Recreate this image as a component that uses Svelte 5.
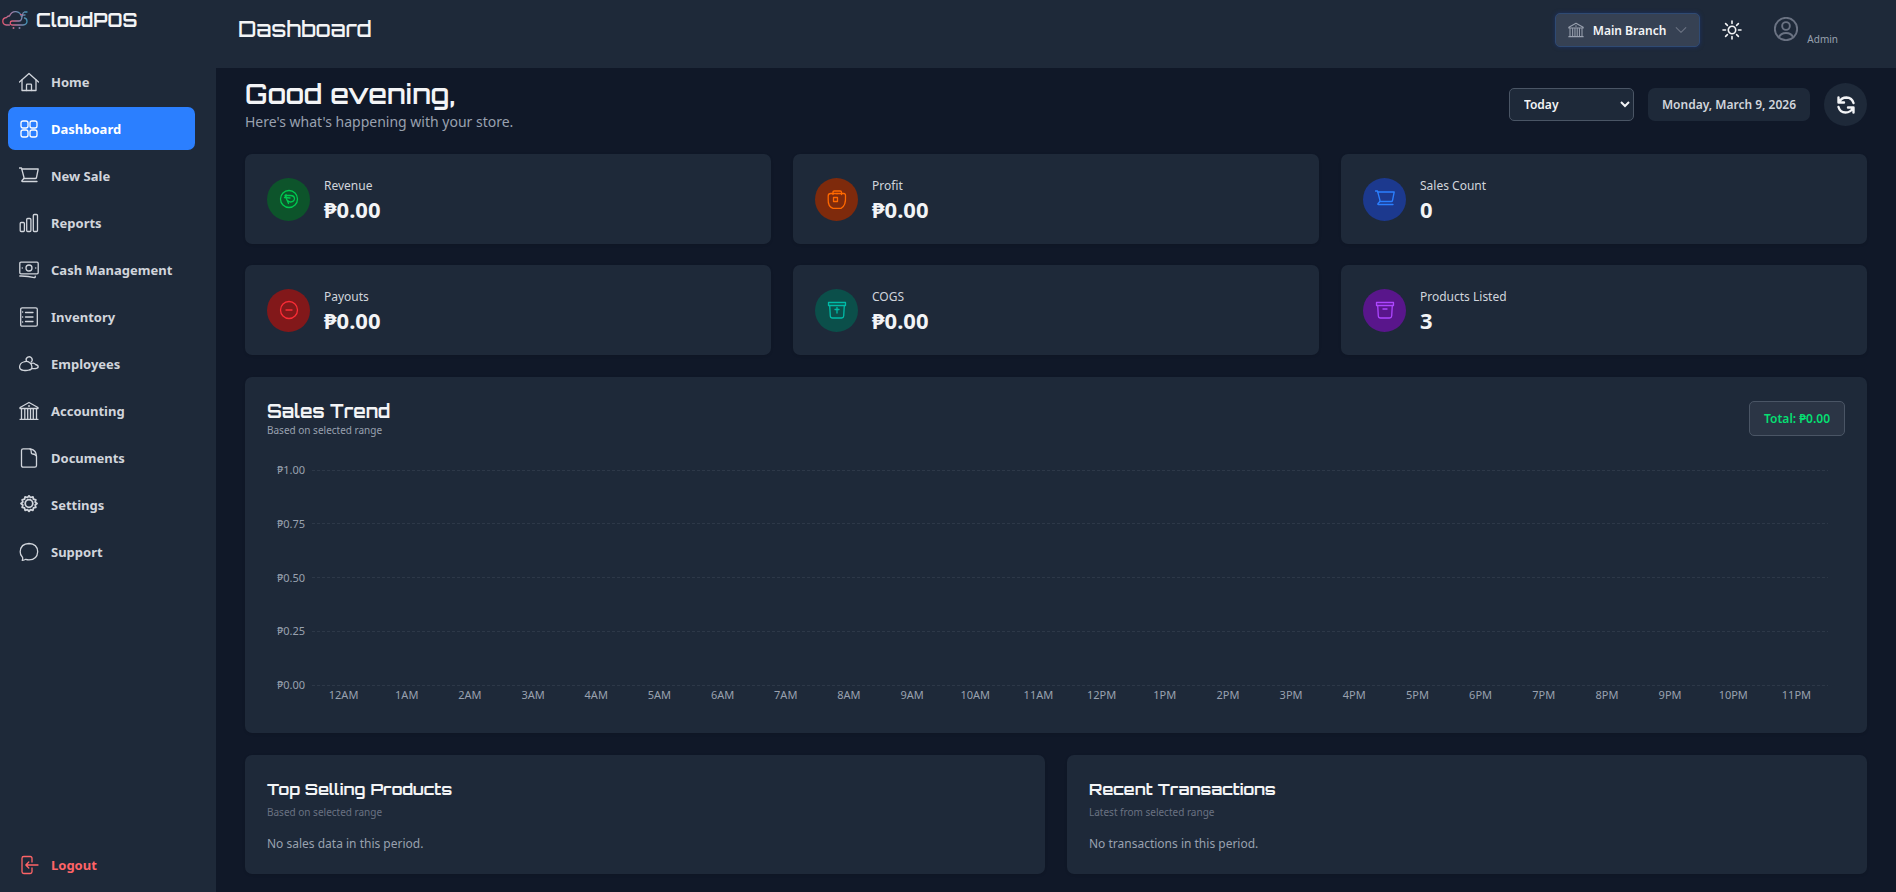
<script lang="ts">
	type Stat = { label: string; value: string; icon: string; tone: string };

	const icons: Record<string, string[]> = {
		home: ['M.5 10 10 1.5 19.5 10', 'M3 8v10.500h14V8', 'M7.500 18.500v-5.500q0-.8.8-.8h3.400q.8 0 .8.8v5.500'],
		grid: [
			'M4 2h3q2 0 2 2v3q0 2-2 2H4Q2 9 2 7V4q0-2 2-2z',
			'M13 2h3q2 0 2 2v3q0 2-2 2h-3q-2 0-2-2V4q0-2 2-2z',
			'M4 11h3q2 0 2 2v3q0 2-2 2H4q-2 0-2-2v-3q0-2 2-2z',
			'M13 11h3q2 0 2 2v3q0 2-2 2h-3q-2 0-2-2v-3q0-2 2-2z'
		],
		cart: ['M.5 2h2l2.500 9.500q.3 1-.5 1.500L3 14.500q-.6 1 .5 1H18', 'M2.700 3h16.500l-1.700 8.500q-.2 1-1.200 1H4.500'],
		bars: [
			'M2.200 9.500h2.200q1 0 1 1v7q0 1-1 1H2.200q-1 0-1-1v-7q0-1 1-1z',
			'M8.700 5.500h2.200q1 0 1 1v11q0 1-1 1H8.700q-1 0-1-1v-11q0-1 1-1z',
			'M15.300 1.500h2.200q1 0 1 1v15q0 1-1 1h-2.200q-1 0-1-1v-15q0-1 1-1z'
		],
		cash: [
			'M2 2.200h16q1.200 0 1.200 1.200v9.200q0 1.200-1.200 1.200H2Q.8 13.800.8 12.600V3.400Q.8 2.200 2 2.200z',
			'M13 8a3 3 0 1 1-6 0 3 3 0 0 1 6 0z',
			'M3.200 8h.1M16.700 8h.1',
			'M.8 16q8-.2 14.500 1.600.9.200.9-.7v-.8'
		],
		list: [
			'M3.200.8h13.600q1.500 0 1.500 1.500v15.400q0 1.500-1.500 1.500H3.200q-1.500 0-1.500-1.500V2.300Q1.700.8 3.200.8z',
			'M3.500 5h.2M3.500 10h.2M3.500 15h.2',
			'M6.500 5.500h7.500M6.500 10h7.500M6.500 14.500h7.500'
		],
		people: [
			'M7.400 7a3 3 0 1 1 4.600 1.200',
			'M4.500 8q3.500-1.500 6 .5 2.500 1.500 2.500 4.500-.2 3-3 3-2.500.8-5.500.3-4-.3-3.900-3.600Q1 9 4.500 8z',
			'M12.300 9.500q2.700-1.200 4.200 1 2.800.6 2.700 2.500-.6 2-6 1.600'
		],
		bank: ['M1 6.500 10 1.500l9 5v1H1z', 'M2.500 8v9.500M5.800 8v9.500M8.700 8v9.500M11.500 8v9.500M14.300 8v9.500M17.500 8v9.500', 'M1 18.300h18', 'M9.500 5h1'],
		doc: ['M4.200.8h7.300q6 1.500 6 7.500v9.200q0 1.700-1.700 1.700H4.200q-1.700 0-1.700-1.700v-15Q2.500.8 4.200.8z', 'M11 1q1.500 1 1.300 3.500 0 1.500 1.500 1.500 2.500 0 3.500 2'],
		gear: [
			'M13.800 8.500a3.800 3.800 0 1 1-7.600 0 3.800 3.800 0 0 1 7.600 0z',
			'M10 .8 11.500 2.500 13.900 1.800 14.500 4.200 16.800 4.800 16.200 7.100 18 8.500 16.200 10 16.800 12.400 14.500 12.900 13.900 15.300 11.500 14.600 10 16.300 8.500 14.600 6.100 15.300 5.500 12.900 3.200 12.400 3.800 10 2 8.500 3.800 7.100 3.200 4.800 5.500 4.200 6.100 1.800 8.500 2.500z'
		],
		chat: ['M3.200 18.300Q4 17 3.600 15.500 1 13 1.200 9.800 1.600 1.700 10 1.500q8.400.4 8.700 8.200-.5 8-8.700 8.100-1.600 0-3.200-.5-1.700 1.100-3.600 1z'],
		logout: ['M13 7V3.200Q13 1.500 11.200 1.500H4.800Q3 1.500 3 3.200v13.600q0 1.700 1.800 1.700h6.400q1.800 0 1.800-1.700V13', 'M19 10H7M9.800 7 6.800 10l3 3'],
		peso: ['M18.500 10a8.500 8.500 0 1 1-17 0 8.500 8.500 0 0 1 17 0z', 'M6 6.500 9.500 14.500M6 6.500h5.500q4 .2 4 3.300-.2 3-4 3.200-1.500 0-3-1.500M5.500 8.500 11 9M7 5.500v3'],
		bag: ['M6 5.500V3.200Q6 2 7.200 2h6Q14.500 2 14.500 3.200v2.300', 'M6 19.300Q.8 17.500 1.200 10.500V7q0-2.500 2.500-2.500h13q2 0 1.800 2.500.6 10-4.500 12.300z', 'M6.500 8.500h4v4h-4z', 'M10 4.500v.3'],
		boxup: ['M1.500 2.500h17v3h-17z', 'M2.700 5.500l.6 10.500q.2 2 2.200 2h9q2 0 2.200-2l.6-10.500', 'M10 13V7.500M8 9.500h4'],
		box: ['M1.500 2.500h17v3h-17z', 'M2.700 5.500l.6 10.500q.2 2 2.200 2h9q2 0 2.200-2l.6-10.500', 'M8 9h4'],
		minus: ['M18.500 10a8.500 8.500 0 1 1-17 0 8.500 8.500 0 0 1 17 0z', 'M7 10h6'],
		sun: ['M13.700 10a3.700 3.700 0 1 1-7.400 0 3.700 3.700 0 0 1 7.400 0z', 'M10 1v2.500M10 16.500V19M1 10h2.500M16.500 10H19M3.600 3.600 5.400 5.400M14.600 14.600l1.800 1.800M3.600 16.400l1.800-1.800M14.600 5.400l1.800-1.800'],
		user: ['M19.300 10a9.300 9.300 0 1 1-18.600 0 9.300 9.300 0 0 1 18.600 0z', 'M13.200 7.500a3.200 3.200 0 1 1-6.400 0 3.200 3.200 0 0 1 6.400 0z', 'M4 17q1.500-3.700 6-3.700t6 3.700'],
		chevron: ['M2 6l8 8 8-8'],
		refresh: ['M2.500 2.500V7.500H8M3 7Q5.500 2.500 10.500 2.500q5.500.2 7 5.500', 'M17.500 17.500v-5H12M17 13q-2.500 4.500-7.500 4.500Q4 17.300 2.500 12']
	};

	const nav = [
		{ label: 'Home', icon: 'home' },
		{ label: 'Dashboard', icon: 'grid' },
		{ label: 'New Sale', icon: 'cart' },
		{ label: 'Reports', icon: 'bars' },
		{ label: 'Cash Management', icon: 'cash' },
		{ label: 'Inventory', icon: 'list' },
		{ label: 'Employees', icon: 'people' },
		{ label: 'Accounting', icon: 'bank' },
		{ label: 'Documents', icon: 'doc' },
		{ label: 'Settings', icon: 'gear' },
		{ label: 'Support', icon: 'chat' }
	];

	const stats: Stat[] = [
		{ label: 'Revenue', value: '₱0.00', icon: 'peso', tone: 'green' },
		{ label: 'Profit', value: '₱0.00', icon: 'bag', tone: 'orange' },
		{ label: 'Sales Count', value: '0', icon: 'cart', tone: 'blue' },
		{ label: 'Payouts', value: '₱0.00', icon: 'minus', tone: 'red' },
		{ label: 'COGS', value: '₱0.00', icon: 'boxup', tone: 'teal' },
		{ label: 'Products Listed', value: '3', icon: 'box', tone: 'purple' }
	];

	const ticks = ['₱1.00', '₱0.75', '₱0.50', '₱0.25', '₱0.00'];
	const hours = Array.from({ length: 24 }, (_, h) => `${h % 12 || 12}${h < 12 ? 'AM' : 'PM'}`);

	const panels = [
		{ title: 'Top Selling Products', sub: 'Based on selected range', empty: 'No sales data in this period.' },
		{ title: 'Recent Transactions', sub: 'Latest from selected range', empty: 'No transactions in this period.' }
	];

	let active = $state('Dashboard');
	let range = $state('Today');
</script>

{#snippet icon(name: string)}
	<svg class="icon i-{name}" viewBox="0 0 20 20" aria-hidden="true">
		{#each icons[name] as d}
			<path {d} />
		{/each}
	</svg>
{/snippet}

<div class="app">
	<aside class="sidebar">
		<div class="brand">
			<svg class="logo" viewBox="0 0 26 20" aria-hidden="true">
				<defs>
					<linearGradient id="cloud" x1="0" x2="1">
						<stop offset="0" stop-color="#e2556f" />
						<stop offset="0.5" stop-color="#9c7fa8" />
						<stop offset="1" stop-color="#3f93b5" />
					</linearGradient>
				</defs>
				<g fill="none" stroke="url(#cloud)" stroke-width="1.300" stroke-linecap="round" stroke-linejoin="round">
					<path d="M7.500 15H4.500Q.8 14.500.8 11.200T4.600 7.500Q5.500 5.800 7.500 6 9.500 1.300 14 1.700q4.500.5 5.500 5" />
					<path d="M25 2h-2.500q-1.500.5-1.800 2l-1.200 5q-.5 2-2.500 2H10q-1.800.3-1.800 2t1.800 2h11q4-.4 4-3.800 0-2.700-2.500-3.200" />
					<path d="M18.500 4.500Q20.500 5.500 23 5" />
				</g>
				<circle cx="11.500" cy="18" r="1" fill="#c46a8c" />
				<circle cx="17.500" cy="18" r="1" fill="#8585b0" />
			</svg>
			<span>CloudPOS</span>
		</div>
		<nav>
			{#each nav as item}
				<a href="#{item.icon}" class:active={item.label === active} onclick={() => (active = item.label)}>
					{@render icon(item.icon)}
					{item.label}
				</a>
			{/each}
		</nav>
		<button class="logout">{@render icon('logout')}Logout</button>
	</aside>

	<div class="page">
		<header class="topbar">
			<h1>Dashboard</h1>
			<div class="account">
				<button class="branch">{@render icon('bank')}<span>Main Branch</span>{@render icon('chevron')}</button>
				<button class="theme" aria-label="Toggle theme">{@render icon('sun')}</button>
				<div class="user">{@render icon('user')}<span>Admin</span></div>
			</div>
		</header>

		<main>
			<section class="welcome">
				<div>
					<h2>Good evening,</h2>
					<p>Here's what's happening with your store.</p>
				</div>
				<div class="filters">
					<select bind:value={range} aria-label="Date range">
						<option>Today</option>
						<option>Yesterday</option>
						<option>This Week</option>
						<option>This Month</option>
					</select>
					<span class="date">Monday, March 9, 2026</span>
					<button class="reload" aria-label="Refresh">{@render icon('refresh')}</button>
				</div>
			</section>

			<section class="stats">
				{#each stats as s}
					<div class="card stat">
						<span class="badge {s.tone}">{@render icon(s.icon)}</span>
						<div>
							<div class="label">{s.label}</div>
							<div class="value">{s.value}</div>
						</div>
					</div>
				{/each}
			</section>

			<section class="card trend">
				<div class="trend-head">
					<div>
						<h3>Sales Trend</h3>
						<p>Based on selected range</p>
					</div>
					<span class="total">Total: ₱0.00</span>
				</div>
				<div class="chart">
					<div class="rows">
						{#each ticks as t}
							<div class="row"><span>{t}</span><i></i></div>
						{/each}
					</div>
					<div class="hours">
						{#each hours as h}
							<span>{h}</span>
						{/each}
					</div>
				</div>
			</section>

			<section class="panels">
				{#each panels as p}
					<div class="card panel">
						<h3>{p.title}</h3>
						<p class="sub">{p.sub}</p>
						<p class="empty">{p.empty}</p>
					</div>
				{/each}
			</section>
		</main>
	</div>
</div>

<style>
	:global(body) {
		margin: 0;
		background: #101828;
	}

	.app {
		display: flex;
		min-height: 100vh;
		font-family: 'Segoe UI', 'Noto Sans', sans-serif;
		font-size: 12px;
		color: #f3f4f6;
	}

	h1,
	h2,
	h3,
	p {
		margin: 0;
	}

	h1,
	h2,
	h3,
	.brand {
		font-family: Orbitron, 'DejaVu Sans', sans-serif;
		font-weight: 700;
	}

	button,
	select {
		font: inherit;
		color: inherit;
		border: 0;
		cursor: pointer;
	}

	.icon {
		width: 20px;
		height: 20px;
		flex: none;
		fill: none;
		stroke: currentColor;
		stroke-width: 1.3;
		stroke-linecap: round;
		stroke-linejoin: round;
	}

	.i-gear {
		stroke-width: 1.8;
	}

	.sidebar {
		display: flex;
		flex-direction: column;
		box-sizing: border-box;
		width: 216px;
		flex: none;
		padding-bottom: 6px;
		background: #1e2939;
	}

	.brand {
		display: flex;
		align-items: center;
		gap: 8px;
		height: 40px;
		padding-left: 2px;
		font-size: 18px;
	}

	.logo {
		width: 26px;
		height: 20px;
	}

	nav {
		display: flex;
		flex-direction: column;
		gap: 4px;
		flex: 1;
		padding: 20px 21px 0 8px;
	}

	nav a,
	.logout {
		display: flex;
		align-items: center;
		gap: 12px;
		height: 43px;
		padding: 0 11px;
		border-radius: 7px;
		font-size: 13px;
		font-weight: 700;
		color: #d1d5dc;
		text-decoration: none;
	}

	nav a.active {
		background: #2b7fff;
		color: #fff;
	}

	.logout {
		margin: 0 21px 0 8px;
		background: none;
		color: #ff6467;
	}

	.page {
		flex: 1;
		min-width: 0;
	}

	.topbar {
		display: flex;
		justify-content: space-between;
		box-sizing: border-box;
		height: 68px;
		padding: 13px 58px 0 22px;
		background: #1e2939;
	}

	h1 {
		font-size: 22px;
		font-weight: 500;
		line-height: 32px;
	}

	.account {
		display: flex;
		align-items: flex-start;
	}

	.branch {
		display: flex;
		align-items: center;
		gap: 9px;
		box-sizing: border-box;
		height: 34px;
		padding: 0 12px;
		border: 1px solid #2f4a73;
		border-radius: 5px;
		background: #364153;
		box-shadow: 0 0 4px #1c398e80;
		font-weight: 600;
	}

	.branch .icon {
		width: 16px;
		height: 16px;
		color: #99a1af;
	}

	.branch .i-chevron {
		width: 12px;
		height: 12px;
		color: #6a7282;
		stroke-width: 1.8;
	}

	.theme {
		display: flex;
		margin: 0 30px 0 20px;
		padding: 7px 2px;
		background: none;
	}

	.theme .icon {
		stroke-width: 1.6;
	}

	.user {
		display: flex;
		gap: 9px;
		padding-top: 4px;
		color: #99a1af;
		font-size: 10px;
		line-height: 16px;
	}

	.user .icon {
		width: 24px;
		height: 24px;
		color: #6a7282;
		stroke-width: 1.6;
	}

	.user span {
		padding-top: 14px;
	}

	main {
		display: flex;
		flex-direction: column;
		gap: 22px;
		padding: 9px 29px 18px;
	}

	.welcome,
	.trend-head {
		display: flex;
		align-items: center;
		justify-content: space-between;
	}

	.welcome h2 {
		font-size: 27px;
		font-weight: 600;
		line-height: 34px;
	}

	.welcome p {
		font-size: 14px;
		line-height: 21px;
		color: #99a1af;
	}

	.filters {
		display: flex;
		align-items: center;
		gap: 14px;
		font-weight: 600;
	}

	select {
		box-sizing: border-box;
		width: 125px;
		height: 33px;
		padding: 0 0 0 10px;
		border: 1px solid #4a5565;
		border-radius: 5px;
		background: #1e2939;
	}

	.date {
		padding: 0 14px;
		border-radius: 7px;
		background: #1e2939;
		line-height: 33px;
		color: #d1d5dc;
	}

	.reload {
		display: grid;
		place-items: center;
		width: 43px;
		height: 43px;
		padding: 0;
		border-radius: 50%;
		background: #1e2939;
	}

	.reload .icon {
		stroke-width: 2.4;
	}

	.card {
		border-radius: 7px;
		background: #1e2939;
		box-shadow: 0 1px 3px #0000001a;
	}

	.stats {
		display: grid;
		grid-template-columns: repeat(3, 1fr);
		gap: 21px 22px;
	}

	.stat {
		display: flex;
		align-items: center;
		gap: 14px;
		height: 90px;
		padding-left: 22px;
	}

	.badge {
		display: grid;
		place-items: center;
		width: 43px;
		height: 43px;
		border-radius: 50%;
	}

	.green {
		background: #0d542b;
		color: #00c950;
	}

	.orange {
		background: #7e2a0c;
		color: #ff6900;
	}

	.blue {
		background: #1c398e;
		color: #2b7fff;
	}

	.red {
		background: #82181a;
		color: #fb2c36;
	}

	.teal {
		background: #0b4f4a;
		color: #00bba7;
	}

	.purple {
		background: #59168b;
		color: #ad46ff;
	}

	.label {
		line-height: 20px;
		color: #d1d5dc;
	}

	.value {
		font-size: 22px;
		font-weight: 700;
		line-height: 26px;
	}

	.trend {
		padding: 22px 22px 33px;
	}

	.trend h3 {
		font-size: 18px;
		line-height: 24px;
	}

	.trend-head p {
		font-size: 10px;
		line-height: 15px;
		color: #99a1af;
	}

	.total {
		padding: 0 14px;
		border: 1px solid #4a5565;
		border-radius: 5px;
		background: #2b3545;
		font-weight: 600;
		line-height: 33px;
		color: #05df72;
	}

	.chart {
		padding: 27px 17px 0 0;
		font-size: 11px;
		line-height: 10px;
		color: #99a1af;
	}

	.rows {
		display: flex;
		flex-direction: column;
		justify-content: space-between;
		height: 225px;
	}

	.row {
		display: flex;
		align-items: center;
		gap: 7px;
	}

	.row span {
		width: 38px;
		text-align: right;
	}

	.row i {
		flex: 1;
		height: 1px;
		background: repeating-linear-gradient(90deg, #2d3848 0 3px, transparent 3px 5px);
	}

	.hours {
		display: grid;
		grid-template-columns: repeat(24, 1fr);
		padding-left: 45px;
		text-align: center;
	}

	.panels {
		display: grid;
		grid-template-columns: 1fr 1fr;
		gap: 22px;
	}

	.panel {
		padding: 22px 22px 20px;
	}

	.panel h3 {
		font-size: 16px;
		line-height: 24px;
	}

	.panel .sub {
		padding-top: 4px;
		font-size: 10px;
		line-height: 15px;
		color: #6a7282;
	}

	.empty {
		padding-top: 14px;
		line-height: 20px;
		color: #99a1af;
	}
</style>
